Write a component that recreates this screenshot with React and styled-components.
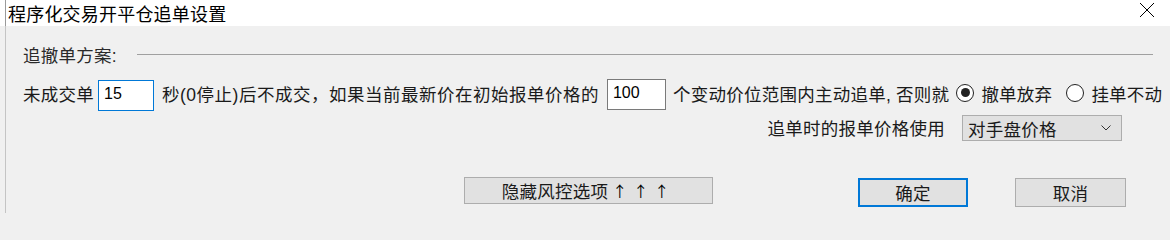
import React from "react";
import styled, { createGlobalStyle } from "styled-components";

const GlobalStyle = createGlobalStyle`
  html, body {
    margin: 0;
    padding: 0;
    background: #f0f0f0;
  }
`;

const Window = styled.div`
  width: 1170px;
  height: 213px;
  overflow: hidden;
  background: linear-gradient(to right, transparent 5px, #c4c4c4 5px, #c4c4c4 6px, transparent 6px), #f0f0f0;
  font-family: "Liberation Sans", "Noto Sans CJK SC", sans-serif;
  font-size: 17.5px;
  letter-spacing: 0.25px;
  color: #1a1a1a;
`;

const TitleBar = styled.div`
  box-sizing: border-box;
  height: 26px;
  display: flex;
  align-items: flex-start;
  justify-content: space-between;
  padding: 2px 15px 0 8px;
  background: linear-gradient(to right, transparent 5px, #9a9a9a 5px, #9a9a9a 6px, transparent 6px), #ffffff;
  font-family: "Noto Sans CJK SC", sans-serif;
  font-size: 18px;
  letter-spacing: 0.2px;
  color: #000;
  line-height: 22px;
`;

const CloseIcon = styled.svg`
  width: 16px;
  height: 16px;
  margin-top: 0;
`;

const GroupHeader = styled.div`
  display: flex;
  align-items: center;
  height: 20px;
  margin: 18px 17px 0 23px;
  color: #2a2a2a;
`;

const GroupLine = styled.div`
  flex: 1;
  height: 1px;
  background: #a0a0a0;
  margin-left: 20px;
`;

const Row = styled.div`
  display: flex;
  align-items: center;
  height: ${(p) => p.$h}px;
  margin-top: ${(p) => p.$top}px;
  padding-left: 23px;
  padding-right: ${(p) => p.$right || 0}px;
  justify-content: ${(p) => (p.$end ? "flex-end" : "flex-start")};
  white-space: nowrap;

  & > * {
    flex-shrink: 0;
  }
`;

const Text = styled.span`
  margin-left: ${(p) => p.$ml || 0}px;
  margin-top: -2px;
  letter-spacing: ${(p) => p.$ls ?? 0.25}px;
`;

const Field = styled.div`
  box-sizing: border-box;
  width: ${(p) => p.$w}px;
  height: 31px;
  margin-left: ${(p) => p.$ml || 0}px;
  margin-top: ${(p) => p.$mt || 0}px;
  background: #fff;
  border: 1px solid ${(p) => (p.$focused ? "#0078d7" : "#7a7a7a")};
  font-family: "Liberation Sans", sans-serif;
  font-size: 16px;
  letter-spacing: 0;
  color: #000;
  padding: 4px 0 0 5px;
`;

const RadioCircle = styled.span`
  box-sizing: border-box;
  width: 18px;
  height: 18px;
  border-radius: 50%;
  border: 1px solid #222;
  background: #fff;
  display: inline-flex;
  align-items: center;
  justify-content: center;
  margin-left: ${(p) => p.$ml || 0}px;
  margin-right: 7px;
  margin-top: -3px;

  &::after {
    content: "";
    width: 9px;
    height: 9px;
    border-radius: 50%;
    background: #222;
    display: ${(p) => (p.$checked ? "block" : "none")};
  }
`;

const Select = styled.div`
  box-sizing: border-box;
  width: 160px;
  height: 26px;
  margin-left: 17px;
  display: flex;
  align-items: center;
  justify-content: space-between;
  padding: 0 10px 0 5px;
  background: #e1e1e1;
  border: 1px solid #adadad;
`;

const Chevron = styled.svg`
  width: 10px;
  height: 6px;
`;

const ButtonRow = styled.div`
  display: flex;
  align-items: flex-start;
  margin-top: 36px;
  padding-left: 464px;
`;

const Button = styled.div`
  box-sizing: border-box;
  width: ${(p) => p.$w}px;
  height: ${(p) => p.$h}px;
  margin-left: ${(p) => p.$ml || 0}px;
  margin-top: ${(p) => p.$mt || 0}px;
  display: flex;
  align-items: center;
  justify-content: center;
  background: #e1e1e1;
  border: ${(p) => (p.$primary ? "2px solid #0078d7" : "1px solid #adadad")};
  color: #1a1a1a;
`;

const Arrows = styled.span`
  font-family: "Noto Sans CJK SC", sans-serif;
  font-size: 15px;
  letter-spacing: 6px;
  margin-left: 4px;
  color: #000;
`;

export default function App() {
  return (
    <>
      <GlobalStyle />
      <Window>
        <TitleBar>
          <span>程序化交易开平仓追单设置</span>
          <CloseIcon viewBox="0 0 16 16">
            <path d="M1 1 L15 15 M15 1 L1 15" stroke="#000" strokeWidth="1" fill="none" />
          </CloseIcon>
        </TitleBar>

        <GroupHeader>
          <span>追撤单方案:</span>
          <GroupLine />
        </GroupHeader>

        <Row $h={32} $top={14}>
          <Text>未成交单</Text>
          <Field $w={56} $ml={4} $mt={2} $focused>15</Field>
          <Text $ml={8} $ls={0.5}>秒(0停止)后不成交，如果当前最新价在初始报单价格的</Text>
          <Field $w={59} $ml={8}>100</Field>
          <Text $ml={7}>个变动价位范围内主动追单, 否则就</Text>
          <RadioCircle $ml={7} $checked />
          <Text>撤单放弃</Text>
          <RadioCircle $ml={14} />
          <Text>挂单不动</Text>
        </Row>

        <Row $h={26} $top={5} $end $right={48}>
          <Text>追单时的报单价格使用</Text>
          <Select>
            <span>对手盘价格</span>
            <Chevron viewBox="0 0 10 6">
              <path d="M0.5 0.5 L5 5 L9.5 0.5" stroke="#333" strokeWidth="1" fill="none" />
            </Chevron>
          </Select>
        </Row>

        <ButtonRow>
          <Button $w={249} $h={27}>
            隐藏风控选项<Arrows>↑↑↑</Arrows>
          </Button>
          <Button $w={110} $h={29} $ml={145} $mt={1} $primary>
            确定
          </Button>
          <Button $w={111} $h={29} $ml={47} $mt={1}>
            取消
          </Button>
        </ButtonRow>
      </Window>
    </>
  );
}
